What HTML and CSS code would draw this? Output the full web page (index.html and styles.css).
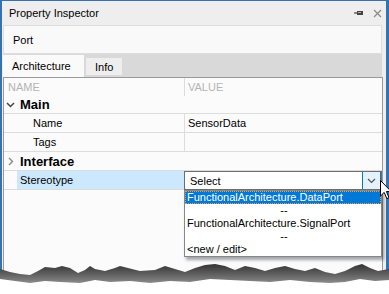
FILE: index.html
```html
<!DOCTYPE html>
<html>
<head>
    <meta charset="UTF-8" />
    <title>Property Inspector</title>
    <link rel="stylesheet" href="styles.css">
</head>
<body>
    <div class="window">
        <div class="titlebar">
            <span class="title">Property Inspector</span>
            <span class="tools">
                <svg width="10" height="6" viewBox="0 0 10 6"><path d="M0 3h3" stroke="#444" stroke-width="1.2"/><rect x="3" y="1" width="6" height="4" fill="#444"/><rect x="4" y="2" width="3" height="1" fill="#aaa"/></svg>
                <svg width="9" height="9" viewBox="0 0 9 9"><path d="M1 1l7 7M8 1l-7 7" stroke="#8a8a8a" stroke-width="1.2"/></svg>
            </span>
        </div>

        <div class="element">Port</div>

        <div class="tabs">
            <div class="tab active">Architecture</div>
            <div class="tab">Info</div>
        </div>

        <div class="content">
            <div class="row head">
                <div class="cell name-col">NAME</div>
                <div class="cell value-col">VALUE</div>
            </div>
            <div class="row group first">
                <div class="gutter"><svg width="9" height="6" viewBox="0 0 9 6"><path d="M1 1l3.5 3.5L8 1" fill="none" stroke="#444" stroke-width="1.5"/></svg></div>
                <div class="cell label">Main</div>
            </div>
            <div class="row">
                <div class="gutter"></div>
                <div class="cell name-col child">Name</div>
                <div class="cell value-col">SensorData</div>
            </div>
            <div class="row">
                <div class="gutter"></div>
                <div class="cell name-col child">Tags</div>
                <div class="cell value-col"></div>
            </div>
            <div class="row group">
                <div class="gutter"><svg width="6" height="9" viewBox="0 0 6 9"><path d="M1 1l3.5 3.5L1 8" fill="none" stroke="#888" stroke-width="1.4"/></svg></div>
                <div class="cell label">Interface</div>
            </div>
            <div class="row">
                <div class="gutter"></div>
                <div class="cell name-col selected">Stereotype</div>
                <div class="combo">
                    <span class="combo-text">Select</span>
                    <span class="combo-btn"><svg width="9" height="6" viewBox="0 0 9 6"><path d="M1 1l3.5 3.5L8 1" fill="none" stroke="#555" stroke-width="1.2"/></svg></span>
                </div>
            </div>

            <div class="dropdown">
                <div class="item current">FunctionalArchitecture.DataPort</div>
                <div class="item sep">--</div>
                <div class="item">FunctionalArchitecture.SignalPort</div>
                <div class="item sep">--</div>
                <div class="item">&lt;new / edit&gt;</div>
            </div>
        </div>
    </div>

    <svg class="tear" width="389" height="40" viewBox="0 256 389 40">
        <defs>
            <linearGradient id="shade" x1="0" y1="0" x2="0" y2="1">
                <stop offset="0" stop-color="#333333"/>
                <stop offset="0.45" stop-color="#777777"/>
                <stop offset="1" stop-color="#f0f0f0"/>
            </linearGradient>
            <filter id="soft"><feGaussianBlur stdDeviation="0.7"/></filter>
        </defs>
        <path filter="url(#soft)" fill="url(#shade)" d="M0 269 L10 272 L20 274 L30 275 L38 271 L45 267 L55 268 L62 266 L70 268 L78 273 L85 270 L90 266 L95 269 L105 271 L115 268 L120 266 L128 268 L140 271 L155 270 L165 266 L175 269 L185 272 L195 268 L205 265 L215 264 L225 266 L235 270 L245 266 L255 268 L265 271 L275 268 L285 266 L295 269 L305 271 L315 268 L325 272 L335 274 L345 271 L355 266 L362 264 L370 268 L378 271 L389 269 L389 298 L0 298 Z"/>
        <path fill="#ffffff" d="M0 279 L15 281 L30 283 L45 281 L60 282 L80 283 L95 280 L110 282 L130 281 L150 283 L170 281 L190 282 L210 279 L230 280 L250 281 L270 282 L290 280 L310 282 L330 283 L345 282 L360 279 L375 281 L389 280 L389 298 L0 298 Z"/>
    </svg>

    <svg class="cursor" width="12" height="20" viewBox="0 0 12 20"><path d="M0.5 0.5 L0.5 16 L4.2 12.4 L6.8 18.6 L9 17.6 L6.4 11.5 L11.2 11.5 Z" fill="#fff" stroke="#000" stroke-width="1"/></svg>
</body>
</html>
```

FILE: styles.css
```css
body {
    margin: 0;
    width: 389px;
    height: 294px;
    overflow: hidden;
    position: relative;
    background-color: #ffffff;
    font-family: 'Liberation Sans', Arial, sans-serif;
    font-size: 11px;
    color: #000000;
}

.window {
    box-sizing: border-box;
    height: 294px;
    border-top: 1px solid #3572b0;
    border-left: 2px solid #3572b0;
    border-right: 3px solid #3572b0;
    background-color: #eeeeee;
    display: flex;
    flex-direction: column;
}

.titlebar {
    height: 24px;
    display: flex;
    align-items: center;
    justify-content: space-between;
    padding: 0 4px 0 7px;
}

.tools {
    display: flex;
    align-items: center;
    gap: 9px;
}

.element {
    box-sizing: border-box;
    height: 29px;
    margin: 0 4px 0 1px;
    padding-left: 9px;
    display: flex;
    align-items: center;
    background-color: #f9f9f9;
    border: 1px solid #dedede;
}

.tabs {
    height: 23px;
    margin: 0 4px 0 1px;
    background-color: #d9d9d9;
    display: flex;
    align-items: flex-end;
    gap: 2px;
}

.tab {
    box-sizing: border-box;
    height: 17px;
    margin-bottom: 2px;
    padding: 0 9px;
    display: flex;
    align-items: center;
    background-color: #eeeeee;
}

.tab.active {
    height: 22px;
    margin-bottom: 0;
    padding: 0 9px;
    width: 81px;
    background-color: #fafafa;
}

.content {
    flex: 1;
    position: relative;
    margin: 0 3px 0 1px;
    border: 1px solid #9a9a9a;
    border-bottom: none;
    background-color: #fbfbfb;
}

.row {
    display: grid;
    grid-template-columns: 13px 167px 1fr;
    height: 19px;
    box-sizing: border-box;
    border-bottom: 1px solid #dcdcdc;
}

.row.head {
    height: 18px;
    border-bottom: none;
    grid-template-columns: 180px 1fr;
    color: #b4b4b4;
}

.row.head .name-col {
    padding-left: 4px;
}

.row.group {
    grid-template-columns: 13px 1fr;
}

.row.group.first {
    height: 18px;
}

.cell {
    display: flex;
    align-items: center;
    overflow: hidden;
    white-space: nowrap;
}

.gutter {
    display: flex;
    align-items: center;
    justify-content: center;
}

.label {
    font-size: 13px;
    font-weight: bold;
    padding-left: 3px;
}

.name-col {
    padding-left: 3px;
}

.name-col.child {
    padding-left: 16px;
}

.value-col {
    padding-left: 3px;
    border-left: 1px solid #dcdcdc;
}

.selected {
    background-color: #cce8ff;
}

.combo {
    box-sizing: border-box;
    height: 19px;
    margin-bottom: -1px;
    display: flex;
    align-items: stretch;
    background-color: #ffffff;
    border: 1px solid #6e6e6e;
}

.combo-text {
    flex: 1;
    padding-left: 5px;
    display: flex;
    align-items: center;
}

.combo-btn {
    width: 17px;
    display: flex;
    align-items: center;
    justify-content: center;
    background-color: #e5f1fb;
    border-left: 1px solid #0078d7;
    border-right: 1px solid #0078d7;
}

.dropdown {
    position: absolute;
    top: 112px;
    left: 180px;
    width: 198px;
    box-sizing: border-box;
    background-color: #ffffff;
    border: 1px solid #828790;
    box-shadow: 2px 3px 3px rgba(0, 0, 0, 0.35);
}

.item {
    height: 13px;
    line-height: 13px;
    padding-left: 2px;
    white-space: nowrap;
}

.item.current {
    background-color: #0078d7;
    color: #ffffff;
    outline: 1px dotted #e8a040;
    outline-offset: -1px;
}

.item.sep {
    text-align: center;
}

.tear {
    position: absolute;
    left: 0;
    top: 256px;
}

.cursor {
    position: absolute;
    left: 380px;
    top: 180px;
}
```
